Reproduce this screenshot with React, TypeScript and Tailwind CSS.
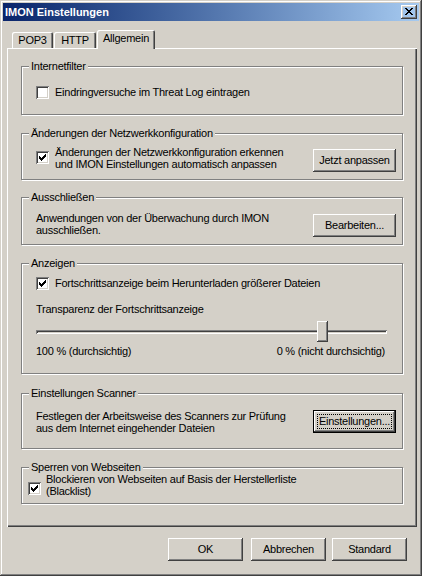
import type { ReactNode } from 'react';

const raised =
  'shadow-[inset_-1px_-1px_0_#404040,inset_1px_1px_0_#fff,inset_-2px_-2px_0_#808080,inset_2px_2px_0_#d4d0c8]';
const sunken =
  'shadow-[inset_1px_1px_0_#808080,inset_-1px_-1px_0_#fff,inset_2px_2px_0_#404040,inset_-2px_-2px_0_#d4d0c8]';

function Checkbox({ checked = false }: { checked?: boolean }) {
  return (
    <div className={`w-[13px] h-[13px] shrink-0 bg-white ${sunken}`}>
      {checked && (
        <svg width="13" height="13" viewBox="0 0 13 13" shapeRendering="crispEdges">
          <path
            fill="#000"
            d="M9 3h1v1h-1z M8 4h2v1h-2z M3 5h1v1h-1z M7 5h3v1h-3z M3 6h2v1h-2z M6 6h3v1h-3z M3 7h5v1h-5z M4 8h3v1h-3z M5 9h1v1h-1z"
          />
        </svg>
      )}
    </div>
  );
}

function Button({
  children,
  className = '',
  isDefault = false,
}: {
  children: ReactNode;
  className?: string;
  isDefault?: boolean;
}) {
  if (isDefault) {
    return (
      <div className={`h-[23px] border border-black flex ${className}`}>
        <div className={`flex-1 flex items-center justify-center ${raised}`}>
          <span className="border border-dotted border-black px-[1px] leading-[13px]">
            {children}
          </span>
        </div>
      </div>
    );
  }
  return (
    <div className={`h-[23px] flex items-center justify-center ${raised} ${className}`}>
      {children}
    </div>
  );
}

function Group({
  title,
  className = '',
  children,
}: {
  title: string;
  className?: string;
  children: ReactNode;
}) {
  return (
    <div
      className={`border border-[#808080] shadow-[inset_1px_1px_0_#fff,1px_1px_0_#fff] ${className}`}
    >
      <div className="-mt-[7px] ml-[7px] w-fit bg-[#d4d0c8] px-[2px] leading-[13px]">
        {title}
      </div>
      {children}
    </div>
  );
}

export default function App() {
  return (
    <div
      className="w-[422px] h-[576px] bg-[#d4d0c8] p-[3px] flex flex-col text-[11px] tracking-[-0.25px] text-black font-['Liberation_Sans',Arial,sans-serif] shadow-[inset_-1px_-1px_0_#404040,inset_1px_1px_0_#d4d0c8,inset_-2px_-2px_0_#808080,inset_2px_2px_0_#fff] select-none"
    >
      {/* title bar */}
      <div className="h-[18px] flex items-center justify-between bg-gradient-to-r from-[#0a246a] to-[#a6caf0] pl-[2px] pr-[2px]">
        <span className="font-bold text-white leading-[13px] tracking-normal">IMON Einstellungen</span>
        <div className={`w-[16px] h-[14px] ${raised}`}>
          <svg width="16" height="14" viewBox="0 0 16 14" shapeRendering="crispEdges">
            <path
              fill="#000"
              d="M4 3h2v1h-2z M10 3h2v1h-2z M5 4h2v1h-2z M9 4h2v1h-2z M6 5h4v1h-4z M7 6h2v1h-2z M6 7h4v1h-4z M5 8h2v1h-2z M9 8h2v1h-2z M4 9h2v1h-2z M10 9h2v1h-2z"
            />
          </svg>
        </div>
      </div>

      {/* tabs */}
      <div className="mt-[9px] ml-[4px] pl-[5px] h-[18px] flex items-end">
        <div className="w-[41px] h-[16px] flex items-center justify-center shadow-[inset_1px_1px_0_#fff,inset_-1px_0_0_#404040,inset_-2px_0_0_#808080] rounded-t-[2px]">
          POP3
        </div>
        <div className="ml-[1px] w-[42px] h-[16px] flex items-center justify-center shadow-[inset_1px_1px_0_#fff,inset_-1px_0_0_#404040,inset_-2px_0_0_#808080] rounded-t-[2px]">
          HTTP
        </div>
        <div className="relative z-10 ml-[1px] -mb-px w-[58px] h-[19px] pb-[2px] bg-[#d4d0c8] flex items-center justify-center shadow-[inset_1px_1px_0_#fff,inset_-1px_0_0_#404040,inset_-2px_0_0_#808080] rounded-t-[2px]">
          Allgemein
        </div>
      </div>

      {/* tab panel */}
      <div className="ml-[4px] mr-[2px] h-[479px] flex flex-col px-[14px] pt-[18px] shadow-[inset_1px_1px_0_#fff,inset_-1px_-1px_0_#404040,inset_-2px_-2px_0_#808080]">
        <Group title="Internetfilter" className="h-[49px]">
          <div className="mt-[13px] pl-[14px] flex items-center gap-[6px]">
            <Checkbox />
            <span className="leading-[13px]">Eindringversuche im Threat Log eintragen</span>
          </div>
        </Group>

        <Group title="Änderungen der Netzwerkkonfiguration" className="mt-[18px] h-[47px]">
          <div className="mt-[6px] pl-[14px] pr-[6px] flex items-start">
            <div className="mt-[5px]">
              <Checkbox checked />
            </div>
            <div className="ml-[6px] leading-[12px]">
              Änderungen der Netzwerkkonfiguration erkennen
              <br />
              und IMON Einstellungen automatisch anpassen
            </div>
            <Button className="ml-auto mt-[3px] w-[83px]">Jetzt anpassen</Button>
          </div>
        </Group>

        <Group title="Ausschließen" className="mt-[17px] h-[48px]">
          <div className="mt-[8px] pl-[14px] pr-[6px] flex items-start">
            <div className="leading-[12px]">
              Anwendungen von der Überwachung durch IMON
              <br />
              ausschließen.
            </div>
            <Button className="ml-auto mt-[2px] w-[83px]">Bearbeiten...</Button>
          </div>
        </Group>

        <Group title="Anzeigen" className="mt-[18px] h-[111px]">
          <div className="mt-[7px] pl-[14px] flex items-center gap-[6px]">
            <Checkbox checked />
            <span className="leading-[13px]">
              Fortschrittsanzeige beim Herunterladen größerer Dateien
            </span>
          </div>
          <div className="mt-[13px] pl-[14px] leading-[13px]">
            Transparenz der Fortschrittsanzeige
          </div>
          <div className="ml-[14px] mt-[5px] w-[351px] h-[21px] relative flex items-center">
            <div className={`w-full h-[4px] ${sunken}`} />
            <div className={`absolute left-[281px] top-0 w-[11px] h-[21px] bg-[#d4d0c8] ${raised}`} />
          </div>
          <div className="ml-[14px] mt-[3px] w-[351px] pr-[2px] flex justify-between leading-[13px]">
            <span>100 % (durchsichtig)</span>
            <span>0 % (nicht durchsichtig)</span>
          </div>
        </Group>

        <Group title="Einstellungen Scanner" className="mt-[19px] h-[56px]">
          <div className="mt-[10px] pl-[14px] pr-[6px] flex items-start">
            <div className="leading-[12px]">
              Festlegen der Arbeitsweise des Scanners zur Prüfung
              <br />
              aus dem Internet eingehender Dateien
            </div>
            <Button isDefault className="ml-auto w-[83px]">
              Einstellungen...
            </Button>
          </div>
        </Group>

        <Group title="Sperren von Webseiten" className="mt-[18px] h-[37px]">
          <div className="-mt-px pl-[6px] flex items-start">
            <div className="mt-[9px]">
              <Checkbox checked />
            </div>
            <div className="ml-[5px] leading-[12px]">
              Blockieren von Webseiten auf Basis der Herstellerliste
              <br />
              (Blacklist)
            </div>
          </div>
        </Group>
      </div>

      {/* dialog buttons */}
      <div className="mt-[11px] pr-[12px] flex justify-end">
        <Button className="w-[75px] mr-[8px]">OK</Button>
        <Button className="w-[75px] mr-[6px]">Abbrechen</Button>
        <Button className="w-[75px]">Standard</Button>
      </div>
    </div>
  );
}
